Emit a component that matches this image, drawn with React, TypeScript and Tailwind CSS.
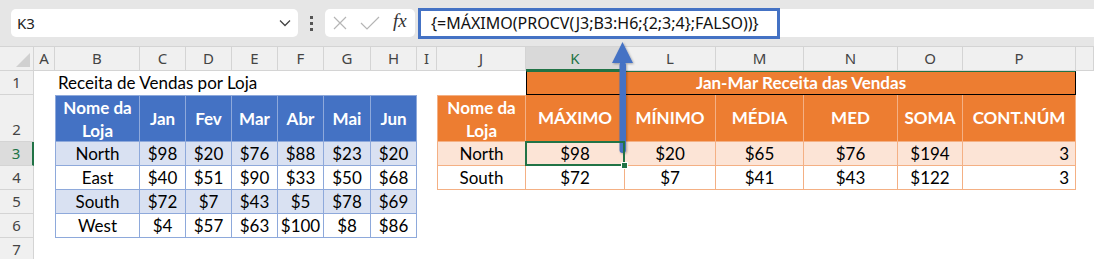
import { ReactNode } from 'react';

const COL_LETTERS = ['A', 'B', 'C', 'D', 'E', 'F', 'G', 'H', 'I', 'J', 'K', 'L', 'M', 'N', 'O', 'P', ''];

const blueHead = ['Jan', 'Fev', 'Mar', 'Abr', 'Mai', 'Jun'];
const blueRows = [
  ['North', '$98', '$20', '$76', '$88', '$23', '$20'],
  ['East', '$40', '$51', '$90', '$33', '$50', '$68'],
  ['South', '$72', '$7', '$43', '$5', '$78', '$69'],
  ['West', '$4', '$57', '$63', '$100', '$8', '$86'],
];

const orangeHead = ['MÁXIMO', 'MÍNIMO', 'MÉDIA', 'MED', 'SOMA', 'CONT.NÚM'];
const orangeRows = [
  ['North', '$98', '$20', '$65', '$76', '$194', '3'],
  ['South', '$72', '$7', '$41', '$43', '$122', '3'],
];

const cellFont = { fontFamily: 'Lato, "Liberation Sans", sans-serif' };
const uiFont = { fontFamily: '"Noto Sans", "Open Sans", sans-serif' };

const Cell = ({ children, className }: { children?: ReactNode; className: string }) => (
  <div className={`flex items-center border-r border-b ${className}`}>{children}</div>
);

const FormulaBar = () => (
  <div className="flex items-center h-[47px] bg-[#e6e6e6] border-b border-[#d4d4d4] pl-[11px]" style={uiFont}>
    <div className="flex items-center justify-between w-[287px] h-[28px] bg-white rounded-[5px] pl-[6px] pr-[7px] text-[15px] text-[#222]">
      <span>K3</span>
      <svg width="12" height="8" viewBox="0 0 12 8">
        <path d="M1 1.5 L6 6.5 L11 1.5" fill="none" stroke="#444" strokeWidth="1.3" />
      </svg>
    </div>
    <div className="flex flex-col gap-[3px] mx-[12px]">
      <span className="w-[3px] h-[3px] bg-[#555]" />
      <span className="w-[3px] h-[3px] bg-[#555]" />
      <span className="w-[3px] h-[3px] bg-[#555]" />
    </div>
    <div className="flex items-center w-[90px] h-[28px] bg-white rounded-[5px] pl-[8px] gap-[13px]">
      <svg width="14" height="14" viewBox="0 0 14 14">
        <path d="M1 1 L13 13 M13 1 L1 13" stroke="#b5b5b5" strokeWidth="1.2" />
      </svg>
      <svg width="20" height="14" viewBox="0 0 20 14">
        <path d="M1 7 L7 13 L19 1" fill="none" stroke="#b5b5b5" strokeWidth="1.2" />
      </svg>
      <span className="italic text-[19px] text-[#333] -mt-[3px]" style={{ fontFamily: '"Liberation Serif", serif' }}>
        fx
      </span>
    </div>
    <div className="flex flex-1 items-center ml-[3px]">
      <div className="flex items-center w-[362px] h-[31px] bg-white border-[3px] border-[#4472c4] pl-[10px] text-[16px] text-[#111]">
        {'{=MÁXIMO(PROCV(J3;B3:H6;{2;3;4};FALSO))}'}
      </div>
      <div className="flex-1 h-[28px] bg-white" />
    </div>
  </div>
);

const Arrow = () => (
  <svg className="absolute left-[606px] top-[38px]" width="34" height="122" viewBox="0 0 34 122">
    <defs>
      <filter id="sh" x="-50%" y="-10%" width="200%" height="120%">
        <feDropShadow dx="1" dy="1" stdDeviation="1" floodColor="#000" floodOpacity="0.3" />
      </filter>
    </defs>
    <g filter="url(#sh)" fill="#4472c4">
      <path d="M16.5 4 L27 25 L6 25 Z" />
      <rect x="13.5" y="24" width="6.5" height="91" rx="3" />
    </g>
  </svg>
);

export default function App() {
  return (
    <div className="relative w-[1094px] h-[259px] overflow-hidden bg-white">
      <FormulaBar />
      <div
        className="grid grid-cols-[34px_21px_85px_46px_46px_46px_46px_47px_46px_20px_89px_99px_91px_88px_94px_65px_113px_18px] grid-rows-[24px_24px_47px_24px_24px_24px_24px_24px] text-[17px]"
        style={cellFont}
      >
        {/* corner */}
        <div className="relative col-start-1 row-start-1 bg-[#f0f0f0] border-r border-b border-[#d4d4d4]">
          <svg className="absolute right-[3px] bottom-[3px]" width="14" height="14" viewBox="0 0 14 14">
            <path d="M14 0 L14 14 L0 14 Z" fill="#d0d0d0" />
          </svg>
        </div>
        {COL_LETTERS.map((l, i) => (
          <div
            key={`c${i}`}
            className={
              l === 'K'
                ? 'row-start-1 flex items-center justify-center bg-[#d9d9d9] text-[#217346] border-r border-[#d4d4d4] border-b-2 border-b-[#217346] text-[15px]'
                : 'row-start-1 flex items-center justify-center bg-[#f0f0f0] text-[#444] border-r border-b border-[#d4d4d4] text-[15px]'
            }
            style={uiFont}
          >
            {l}
          </div>
        ))}
        {[1, 2, 3, 4, 5, 6, 7].map((n) => (
          <div
            key={`r${n}`}
            className={
              n === 3
                ? 'col-start-1 flex items-center justify-center bg-[#dcdcdc] text-[#217346] border-b border-[#d4d4d4] border-r-2 border-r-[#217346] text-[15px]'
                : n === 2
                  ? 'col-start-1 flex items-end justify-center pb-[1px] bg-[#f0f0f0] text-[#444] border-r border-b border-[#d4d4d4] text-[15px]'
                  : 'col-start-1 flex items-center justify-center bg-[#f0f0f0] text-[#444] border-r border-b border-[#d4d4d4] text-[15px]'
            }
            style={uiFont}
          >
            {n}
          </div>
        ))}

        {/* B1 title */}
        <div className="col-start-3 row-start-2 flex items-center pl-[3px] whitespace-nowrap overflow-visible z-10">
          Receita de Vendas por Loja
        </div>

        {/* K1:P1 title */}
        <div className="col-start-12 col-end-18 row-start-2 flex items-center justify-center bg-[#ed7d31] border border-black border-t-[#217346] font-bold text-white">
          Jan-Mar Receita das Vendas
        </div>

        {/* blue table */}
        <div className="col-start-3 col-end-10 row-start-3 row-end-8 grid grid-cols-[85px_46px_46px_46px_46px_47px_46px] grid-rows-[47px_24px_24px_24px_24px]">
          <Cell className="justify-center text-center leading-[23px] bg-[#4472c4] text-white font-bold border-[#8ea9db] border-l border-t">
            Nome da
            <br />
            Loja
          </Cell>
          {blueHead.map((h) => (
            <Cell key={h} className="justify-center bg-[#4472c4] text-white font-bold border-[#8ea9db] border-t">
              {h}
            </Cell>
          ))}
          {blueRows.map((row, ri) =>
            row.map((v, ci) => (
              <Cell
                key={`${ri}-${ci}`}
                className={`justify-center text-black border-[#8ea9db] ${ci === 0 ? 'border-l' : ''} ${ri % 2 === 0 ? 'bg-[#d9e1f2]' : 'bg-white'}`}
              >
                {v}
              </Cell>
            ))
          )}
        </div>

        {/* orange table */}
        <div className="col-start-11 col-end-18 row-start-3 row-end-6 grid grid-cols-[89px_99px_91px_88px_94px_65px_113px] grid-rows-[47px_24px_24px]">
          <Cell className="justify-center text-center leading-[23px] bg-[#ed7d31] text-white font-bold border-[#f4b084] border-l border-t">
            Nome da
            <br />
            Loja
          </Cell>
          {orangeHead.map((h) => (
            <Cell key={h} className="justify-center bg-[#ed7d31] text-white font-bold border-[#f4b084] border-t-0">
              {h}
            </Cell>
          ))}
          {orangeRows.map((row, ri) =>
            row.map((v, ci) => (
              <div
                key={`o${ri}-${ci}`}
                className={`relative flex items-center border-r border-b border-[#f4b084] text-black ${ci === 0 ? 'border-l' : ''} ${ci === 6 ? 'justify-end pr-[6px]' : 'justify-center'} ${ri === 0 ? 'bg-[#fce4d6]' : 'bg-white'}`}
              >
                {v}
                {ri === 0 && ci === 1 && (
                  <>
                    <div className="absolute -left-px -top-px -right-px -bottom-px border-2 border-[#217346] z-10" />
                    <div className="absolute -right-[4px] -bottom-[4px] w-[7px] h-[7px] bg-[#217346] border border-white z-20" />
                  </>
                )}
              </div>
            ))
          )}
        </div>
      </div>
      <Arrow />
    </div>
  );
}
